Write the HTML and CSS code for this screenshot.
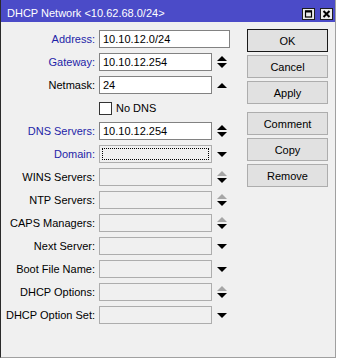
FILE: index.html
```html
<!DOCTYPE html>
<html lang="en">
<head>
  <meta charset="UTF-8" />
  <title>DHCP Network</title>
  <link rel="stylesheet" href="styles.css">
</head>
<body>
  <div class="window">
    <div class="titlebar">
      <span class="title">DHCP Network &lt;10.62.68.0/24&gt;</span>
      <svg class="tb-btn" width="13" height="12" viewBox="0 0 13 12">
        <rect x="0.5" y="0.5" width="12" height="11" fill="#ececec" stroke="#1e1e1e"/>
        <rect x="3.5" y="3" width="6" height="6" fill="none" stroke="#000" stroke-width="1.2"/>
        <rect x="3" y="2.5" width="7" height="2" fill="#000"/>
      </svg>
      <svg class="tb-btn" width="13" height="12" viewBox="0 0 13 12">
        <rect x="0.5" y="0.5" width="12" height="11" fill="#ececec" stroke="#1e1e1e"/>
        <path d="M3.5 3 L9.5 9 M9.5 3 L3.5 9" stroke="#000" stroke-width="2"/>
      </svg>
    </div>
    <div class="content">
      <div class="form">
        <div class="row">
          <span class="lbl link">Address:</span>
          <div class="field wide">10.10.12.0/24</div>
        </div>
        <div class="row">
          <span class="lbl link">Gateway:</span>
          <div class="field">10.10.12.254</div>
          <svg class="arrow" width="10" height="12" viewBox="0 0 10 12"><polygon points="0,5 5,0 10,5" fill="#000"/><polygon points="0,7 10,7 5,12" fill="#000"/></svg>
        </div>
        <div class="row">
          <span class="lbl">Netmask:</span>
          <div class="field">24</div>
          <svg class="arrow" width="10" height="5" viewBox="0 0 10 5"><polygon points="0,5 5,0 10,5" fill="#000"/></svg>
        </div>
        <div class="row">
          <span class="lbl"></span>
          <span class="check"></span>
          <span class="check-text">No DNS</span>
        </div>
        <div class="row">
          <span class="lbl link">DNS Servers:</span>
          <div class="field">10.10.12.254</div>
          <svg class="arrow" width="10" height="12" viewBox="0 0 10 12"><polygon points="0,5 5,0 10,5" fill="#000"/><polygon points="0,7 10,7 5,12" fill="#000"/></svg>
        </div>
        <div class="row">
          <span class="lbl link">Domain:</span>
          <div class="field off focus"><span class="focus-ring"></span></div>
          <svg class="arrow" width="10" height="5" viewBox="0 0 10 5"><polygon points="0,0 10,0 5,5" fill="#000"/></svg>
        </div>
        <div class="row">
          <span class="lbl">WINS Servers:</span>
          <div class="field off"></div>
          <svg class="arrow" width="10" height="12" viewBox="0 0 10 12"><polygon points="0,5 5,0 10,5" fill="#a6a6a6"/><polygon points="0,7 10,7 5,12" fill="#000"/></svg>
        </div>
        <div class="row">
          <span class="lbl">NTP Servers:</span>
          <div class="field off"></div>
          <svg class="arrow" width="10" height="12" viewBox="0 0 10 12"><polygon points="0,5 5,0 10,5" fill="#a6a6a6"/><polygon points="0,7 10,7 5,12" fill="#000"/></svg>
        </div>
        <div class="row">
          <span class="lbl">CAPS Managers:</span>
          <div class="field off"></div>
          <svg class="arrow" width="10" height="12" viewBox="0 0 10 12"><polygon points="0,5 5,0 10,5" fill="#a6a6a6"/><polygon points="0,7 10,7 5,12" fill="#000"/></svg>
        </div>
        <div class="row">
          <span class="lbl">Next Server:</span>
          <div class="field off"></div>
          <svg class="arrow" width="10" height="5" viewBox="0 0 10 5"><polygon points="0,0 10,0 5,5" fill="#000"/></svg>
        </div>
        <div class="row">
          <span class="lbl">Boot File Name:</span>
          <div class="field off"></div>
          <svg class="arrow" width="10" height="5" viewBox="0 0 10 5"><polygon points="0,0 10,0 5,5" fill="#000"/></svg>
        </div>
        <div class="row">
          <span class="lbl">DHCP Options:</span>
          <div class="field off"></div>
          <svg class="arrow" width="10" height="12" viewBox="0 0 10 12"><polygon points="0,5 5,0 10,5" fill="#a6a6a6"/><polygon points="0,7 10,7 5,12" fill="#000"/></svg>
        </div>
        <div class="row">
          <span class="lbl">DHCP Option Set:</span>
          <div class="field off"></div>
          <svg class="arrow" width="10" height="5" viewBox="0 0 10 5"><polygon points="0,0 10,0 5,5" fill="#000"/></svg>
        </div>
      </div>
      <div class="actions">
        <button class="btn default">OK</button>
        <button class="btn">Cancel</button>
        <button class="btn">Apply</button>
        <button class="btn spaced">Comment</button>
        <button class="btn">Copy</button>
        <button class="btn">Remove</button>
      </div>
    </div>
  </div>
</body>
</html>
```

FILE: styles.css
```css
html, body {
  margin: 0;
  background: #ffffff;
}
body {
  font-family: 'Liberation Sans', Arial, sans-serif;
  font-size: 11px;
  color: #000;
}
.window {
  width: 336px;
  height: 358px;
  box-sizing: border-box;
  background: #f0f0f0;
  border-left: 1px solid #2a2a2a;
  border-right: 1px solid #a0a0a0;
  border-bottom: 1px solid #a0a0a0;
}
.titlebar {
  height: 22px;
  box-sizing: border-box;
  background: #4b4bc8;
  color: #fff;
  display: flex;
  align-items: flex-start;
  padding: 7px 2px 0 6px;
  line-height: 13px;
  gap: 5px;
}
.title {
  flex: 1;
  font-size: 11px;
}
.tb-btn {
  display: block;
  margin-top: 1px;
}
.content {
  display: flex;
}
.form {
  width: 246px;
  padding-top: 8px;
}
.row {
  display: flex;
  align-items: center;
  height: 18px;
  margin-bottom: 5px;
}
.lbl {
  width: 94px;
  text-align: right;
  flex: none;
}
.lbl.link {
  color: #1f1fa8;
}
.field {
  margin-left: 4px;
  width: 113px;
  height: 18px;
  box-sizing: border-box;
  border: 1px solid #828282;
  background: #fff;
  padding-left: 3px;
  line-height: 16px;
  position: relative;
}
.field.wide {
  width: 131px;
}
.field.off {
  background: #f0f0f0;
  border-color: #adadad;
}
.focus-ring {
  position: absolute;
  left: 2px;
  top: 2px;
  right: 2px;
  bottom: 2px;
  border: 1px dotted #000;
}
.arrow {
  margin-left: 5px;
  display: block;
}
.check {
  margin-left: 4px;
  width: 13px;
  height: 13px;
  box-sizing: border-box;
  border: 1px solid #333;
  background: #fff;
}
.check-text {
  margin-left: 4px;
}
.actions {
  display: flex;
  flex-direction: column;
  gap: 3px;
  padding-top: 7px;
}
.btn {
  width: 81px;
  height: 23px;
  margin: 0;
  padding: 0;
  font-family: 'Liberation Sans', Arial, sans-serif;
  font-size: 11px;
  color: #000;
  background: #e1e1e1;
  border: 1px solid #adadad;
}
.btn.default {
  border-color: #1a1a1a;
}
.btn.spaced {
  margin-top: 5px;
}
```
